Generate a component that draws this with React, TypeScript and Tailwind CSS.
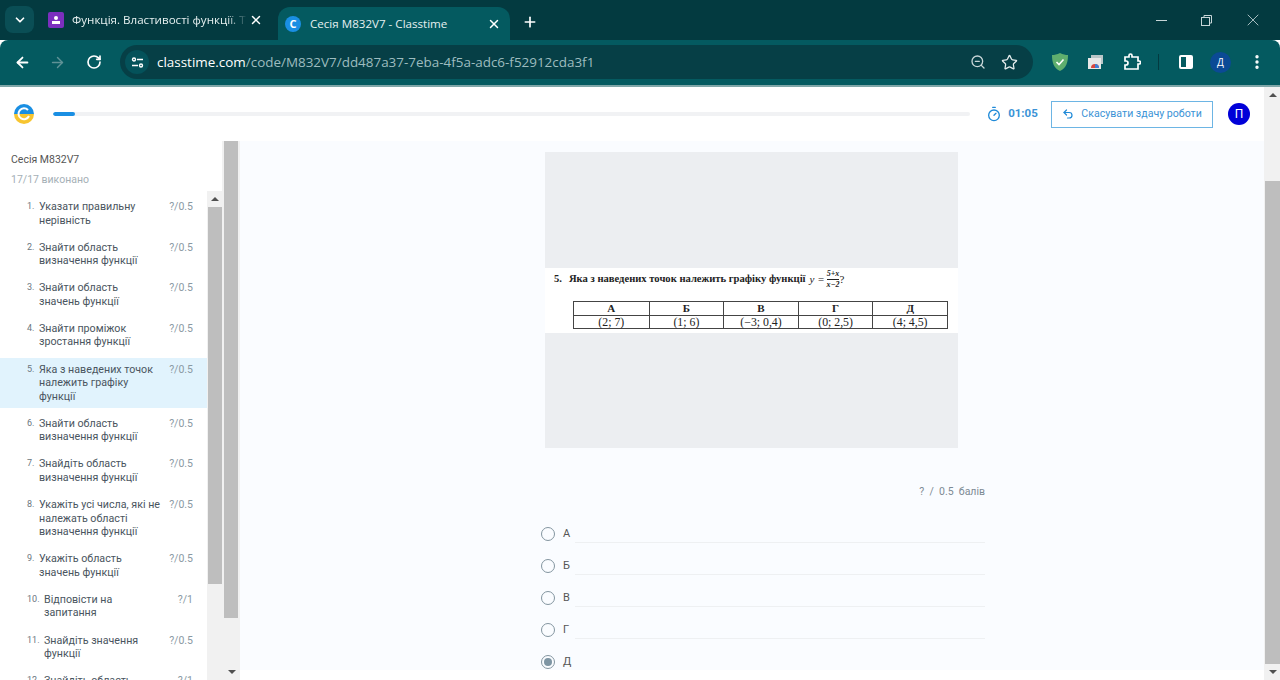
import React from 'react';
import { ArrowLeft, ArrowRight, ChevronDown, EllipsisVertical, Plus, RotateCw, Star, Timer, Undo2, X, ZoomOut } from 'lucide-react';

type Item = { n: number; lines: string[]; score: string; active?: boolean };

const items: Item[] = [
  { n: 1, lines: ['Указати правильну', 'нерівність'], score: '?/0.5' },
  { n: 2, lines: ['Знайти область', 'визначення функції'], score: '?/0.5' },
  { n: 3, lines: ['Знайти область', 'значень функції'], score: '?/0.5' },
  { n: 4, lines: ['Знайти проміжок', 'зростання функції'], score: '?/0.5' },
  { n: 5, lines: ['Яка з наведених точок', 'належить графіку', 'функції'], score: '?/0.5', active: true },
  { n: 6, lines: ['Знайти область', 'визначення функції'], score: '?/0.5' },
  { n: 7, lines: ['Знайдіть область', 'визначення функції'], score: '?/0.5' },
  { n: 8, lines: ['Укажіть усі числа, які не', 'належать області', 'визначення функції'], score: '?/0.5' },
  { n: 9, lines: ['Укажіть область', 'значень функції'], score: '?/0.5' },
  { n: 10, lines: ['Відповісти на', 'запитання'], score: '?/1' },
  { n: 11, lines: ['Знайдіть значення', 'функції'], score: '?/0.5' },
  { n: 12, lines: ['Знайдіть область', 'значень функції'], score: '?/1' },
];

const options = ['А', 'Б', 'В', 'Г', 'Д'];
const tableCols = [
  ['А', '(2; 7)'],
  ['Б', '(1; 6)'],
  ['В', '(−3; 0,4)'],
  ['Г', '(0; 2,5)'],
  ['Д', '(4; 4,5)'],
];

const TabStrip = () => (
  <div className="flex h-10 shrink-0 items-end bg-[#033a40] pl-[5px] text-[11.600px] text-[#e6f0f0] font-['Open_Sans',sans-serif]">
    <div className="mb-[7px] flex h-[27px] w-[29px] items-center justify-center rounded-lg bg-[#0a4e55]">
      <ChevronDown size={14} strokeWidth={3} color="#fff" />
    </div>
    <div className="mb-[7px] ml-[14px] flex h-[27px] w-[230px] items-center">
      <div className="flex h-4 w-4 items-center justify-center rounded-[2px] bg-[#7b2fbf]">
        <svg width="10" height="10" viewBox="0 0 10 10" fill="#fff"><circle cx="5" cy="3" r="2" /><rect x="1" y="6" width="8" height="3" /></svg>
      </div>
      <span className="ml-2 w-[176px] overflow-hidden whitespace-nowrap [mask-image:linear-gradient(to_right,#000_88%,transparent)]">Функція. Властивості функції. Т</span>
      <X size={14} strokeWidth={2.5} color="#fff" className="ml-[1px]" />
    </div>
    <div className="flex h-[33px] w-[232px] items-center rounded-t-xl bg-[#045a60] pl-[7px]">
      <div className="flex h-4 w-4 items-center justify-center rounded-full bg-[#1a8fe3] text-[11px] leading-none font-bold text-white">C</div>
      <span className="ml-[9px] w-[177px] whitespace-nowrap">Сесія M832V7 - Classtime</span>
      <X size={14} strokeWidth={2.5} color="#fff" />
    </div>
    <div className="mb-[10px] ml-[12px]">
      <Plus size={16} strokeWidth={2.5} color="#fff" />
    </div>
    <div className="mb-[10px] ml-auto flex w-[124px] items-center text-[#c7d6d8]">
      <div className="h-px w-[11px] bg-[#c7d6d8]" />
      <svg className="ml-[34px]" width="11" height="11" viewBox="0 0 11 11" fill="none" stroke="#c7d6d8"><rect x="0.5" y="2.5" width="8" height="8" /><path d="M3 2.5V.5h7.5V8H8.5" /></svg>
      <X size={20} strokeWidth={1} className="ml-[31px]" />
    </div>
  </div>
);

const Toolbar = () => (
  <div className="flex h-[47px] shrink-0 items-center rounded-t-lg border-b-2 border-[#7fa6a8] bg-[#045a60] pl-[14px] pb-[1px]">
    <ArrowLeft size={17} strokeWidth={2.5} color="#fff" />
    <ArrowRight size={17} strokeWidth={2} color="#5f9296" className="ml-[18px]" />
    <RotateCw size={16} strokeWidth={2.5} color="#fff" className="ml-[20px]" />
    <div className="ml-[18px] flex h-[34px] w-[913px] items-center rounded-full bg-[#063f46] pl-[5px] font-['Open_Sans',sans-serif]">
      <div className="flex h-6 w-6 items-center justify-center rounded-full bg-[#04525a]">
        <svg width="13" height="13" viewBox="0 0 13 13" fill="none" stroke="#fff" strokeWidth="1.4"><circle cx="3" cy="3.500" r="1.500" /><path d="M6 3.500h6M1 9.500h6" /><circle cx="10" cy="9.500" r="1.500" /></svg>
      </div>
      <span className="ml-2 text-[13.450px] whitespace-nowrap text-white">classtime.com<span className="text-[#9dbcbf]">/code/M832V7/dd487a37-7eba-4f5a-adc6-f52912cda3f1</span></span>
      <ZoomOut size={16} color="#c8d6d8" className="ml-auto" />
      <Star size={17} strokeWidth={1.8} color="#e3ecec" className="mr-[15px] ml-[15px]" />
    </div>
    <svg className="ml-[19px]" width="16" height="18" viewBox="0 0 16 18"><path d="M8 0C5 1.500 2.500 2 0 2c0 7 1.500 13 8 16 6.500-3 8-9 8-16-2.500 0-5-.5-8-2z" fill="#5fae6e" /><path d="M4.500 9l2.500 2.500 4.500-5" fill="none" stroke="#fff" strokeWidth="1.600" /></svg>
    <svg className="ml-[20px]" width="15" height="14" viewBox="0 0 15 14"><rect x="3" y="0" width="12" height="9" fill="#b9c6c8" /><rect x="0" y="3" width="13" height="11" fill="#e8e8e8" /><path d="M3 13a4 4 0 0 1 8 0z" fill="#d9473d" /><path d="M7 9a4 4 0 0 1 4 4H7z" fill="#3f7fd9" /></svg>
    <svg className="ml-[20px]" width="18" height="18" viewBox="0 0 18 18" fill="none" stroke="#fff" strokeWidth="1.700"><path d="M2 4h4V2.500a1.500 1.500 0 0 1 3 0V4h6v4h1a1.500 1.500 0 0 1 0 3h-1v5H2v-4h1a2 2 0 0 0 0-4H2z" /></svg>
    <div className="ml-[17px] h-[16px] w-px bg-[#033a40]" />
    <div className="ml-[20px] flex h-[14px] w-[14px] justify-end rounded-[2px] border-2 border-white">
      <div className="w-1/2 bg-white" />
    </div>
    <div className="ml-[17px] flex h-[21px] w-[21px] items-center justify-center rounded-full bg-[#0b4a95] text-[10px] text-white font-['Open_Sans',sans-serif]">Д</div>
    <EllipsisVertical size={18} strokeWidth={2.5} color="#fff" className="ml-[17px]" />
  </div>
);

const PageHeader = () => (
  <div className="flex h-[54px] shrink-0 items-center bg-white pr-[14px] pl-[14px]">
    <svg width="20" height="20" viewBox="0 0 20 20">
      <path d="M0 10a10 10 0 0 1 20 0z" fill="#1a8fe3" />
      <path d="M0 10a10 10 0 0 0 20 0z" fill="#f7c531" />
      <path d="M14 6a5.500 5.500 0 1 0 1 6" fill="none" stroke="#fff" strokeWidth="2" />
    </svg>
    <div className="ml-[19px] h-1 w-[918px] overflow-hidden rounded-full bg-[#f1f2f4]">
      <div className="h-full w-[22px] rounded-full bg-[#1a8fe3]" />
    </div>
    <Timer size={16} strokeWidth={2} color="#1f8ad8" className="ml-[16px]" />
    <span className="ml-[6px] w-[28px] text-[11.500px] font-bold whitespace-nowrap text-[#3b93d6]">01:05</span>
    <div className="ml-[15px] flex h-[27px] w-[162px] items-center justify-center border border-[#6db5e4] text-[10.600px] text-[#3b93d6]">
      <Undo2 size={12} strokeWidth={2.4} color="#1f8ad8" className="mr-[7px]" />
      Скасувати здачу роботи
    </div>
    <div className="ml-[15px] flex h-[22px] w-[22px] items-center justify-center rounded-full bg-[#0000d8] text-[12px] text-white">П</div>
  </div>
);

const ScrollArrow = ({ up }: { up?: boolean }) => (
  <div className="flex h-4 w-full shrink-0 items-center justify-center">
    <div className={`h-0 w-0 border-x-[4px] border-x-transparent ${up ? 'border-b-[4px] border-b-[#505050]' : 'border-t-[4px] border-t-[#505050]'}`} />
  </div>
);

const Sidebar = () => (
  <div className="flex w-[240px] shrink-0 bg-white">
    <div className="flex w-[222px] shrink-0 flex-col">
      <div className="h-[50px] shrink-0 pt-[11px] pl-[11px]">
        <div className="text-[10.500px] leading-[15px] text-[#555]">Сесія M832V7</div>
        <div className="mt-[5px] text-[10.500px] leading-[15px] text-[#a5b0b6]">17/17 виконано</div>
      </div>
      <div className="flex min-h-0 flex-1">
        <div className="w-[207px] overflow-hidden pt-[4px]">
          {items.map((it) => (
            <div key={it.n} className={`mb-[3.670px] flex py-[5px] pr-[14px] pl-[27px] text-[10.700px] leading-[13.500px] text-[#4a5560] ${it.active ? 'bg-[#e1f3fd]' : ''}`}>
              <span className={`shrink-0 text-[9px] text-[#6b7680] ${it.n > 9 ? 'w-[17px]' : 'w-3'}`}>{it.n}.</span>
              <div className="flex-1 whitespace-nowrap">
                {it.lines.map((l) => <div key={l}>{l}</div>)}
              </div>
              <span className="shrink-0 text-[10.500px] text-[#8a99a3]">{it.score}</span>
            </div>
          ))}
        </div>
        <div className="flex w-[15px] flex-col bg-[#f1f1f1]">
          <ScrollArrow up />
          <div className="ml-[1px] h-[377px] w-[14px] bg-[#bebebe]" />
        </div>
      </div>
    </div>
    <div className="flex w-[18px] flex-col bg-[#f1f1f1] pl-[2px]">
      <div className="h-[477px] w-[14px] bg-[#bebebe]" />
      <div className="mt-auto">
        <ScrollArrow />
      </div>
    </div>
  </div>
);

const QuestionImage = () => (
  <div className="w-[413px] bg-white">
    <div className="h-[116px] bg-[#eceef1]" />
    <div className="h-[65px] font-['Liberation_Serif',serif] text-[10.600px] text-[#222]">
      <div className="flex h-[22px] items-center pl-[9px] font-bold">
        <span>5.</span>
        <span className="ml-[7px]">Яка з наведених точок належить графіку функції</span>
        <span className="ml-1 text-[11px] font-normal italic">y =</span>
        <span className="ml-[2px] inline-flex flex-col items-center text-[8px] leading-[9.500px] italic">
          <span className="border-b border-[#222]">5+x</span>
          <span>x−2</span>
        </span>
        <span className="text-[11px] font-normal">?</span>
      </div>
      <div className="mt-[11px] ml-[28px] w-[375px] border border-[#444]">
        <div className="grid grid-cols-5 border-b border-[#444] text-center text-[11px] font-bold leading-[13px]">
          {tableCols.map((c, i) => <div key={c[0]} className={i ? 'border-l border-[#444]' : ''}>{c[0]}</div>)}
        </div>
        <div className="grid grid-cols-5 text-center text-[11.800px] leading-[12px]">
          {tableCols.map((c, i) => <div key={c[1]} className={i ? 'border-l border-[#444]' : ''}>{c[1]}</div>)}
        </div>
      </div>
    </div>
    <div className="h-[115px] bg-[#eceef1]" />
  </div>
);

const Main = () => (
  <div className="min-w-0 flex-1 bg-white">
    <div className="h-[529px] overflow-hidden bg-[#fafcff] pt-[11px] pl-[301px]">
      <div className="w-[444px]">
        <div className="pl-[4px]"><QuestionImage /></div>
        <div className="mt-[37px] text-right text-[10.500px] leading-[14px] text-[#7d8a94]">?&nbsp; /&nbsp; 0.5&nbsp; балів</div>
        <div className="mt-[19px]">
          {options.map((o, i) => (
            <div key={o} className="flex h-8 items-center">
              <div className="flex h-[14px] w-[14px] shrink-0 items-center justify-center rounded-full border-[1.500px] border-[#83959f]">
                {i === 4 && <div className="h-2 w-2 rounded-full bg-[#7e95a3]" />}
              </div>
              <span className="ml-2 w-3 text-[11px] text-[#555]">{o}</span>
              <div className="mt-[16px] h-px flex-1 bg-[#eef0f2]" />
            </div>
          ))}
        </div>
      </div>
    </div>
  </div>
);

const App: React.FC = () => (
  <div className="flex h-[680px] w-[1280px] flex-col overflow-hidden bg-white font-['Roboto',sans-serif]">
    <TabStrip />
    <Toolbar />
    <div className="flex min-h-0 flex-1">
      <div className="flex min-w-0 flex-1 flex-col">
        <PageHeader />
        <div className="flex min-h-0 flex-1">
          <Sidebar />
          <Main />
        </div>
      </div>
      <div className="flex w-[16px] shrink-0 flex-col bg-[#f1f1f1] pl-[1px]">
        <ScrollArrow up />
        <div className="mt-[78px] h-[483px] w-[15px] bg-[#bebebe]" />
        <div className="mt-auto"><ScrollArrow /></div>
      </div>
    </div>
  </div>
);

export default App;
